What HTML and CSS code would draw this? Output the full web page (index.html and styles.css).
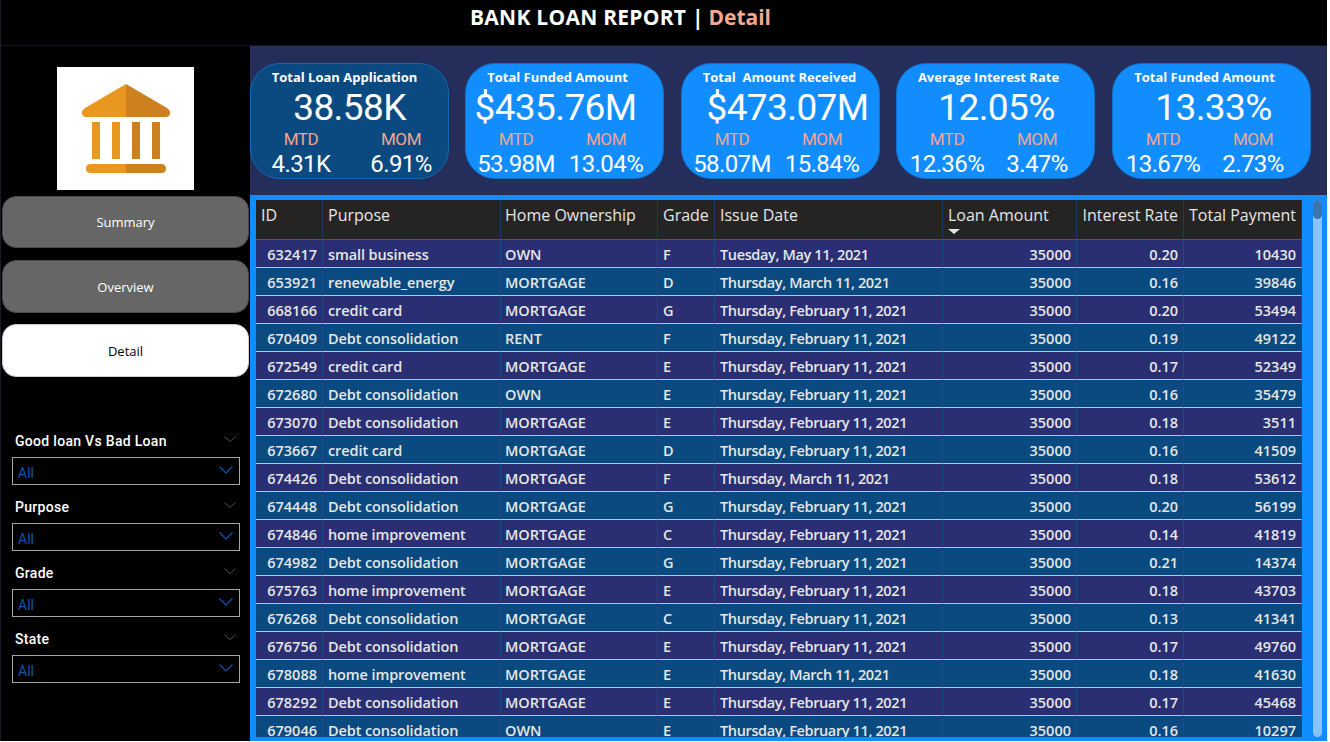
FILE: index.html
```html
<!DOCTYPE html>
<html lang="en">
<head>
  <meta charset="UTF-8" />
  <meta name="viewport" content="width=device-width, initial-scale=1.0"/>
  <title>Bank Loan Report | Detail</title>
  <link rel="stylesheet" href="styles.css">
</head>
<body>
  <div class="page">
    <header class="topbar">
      <h1>BANK LOAN REPORT | <span class="accent">Detail</span></h1>
    </header>

    <div class="content">
      <aside class="sidebar">
        <div class="logo">
          <svg width="88" height="90" viewBox="0 0 88 90">
            <path d="M44 0 L3 24 Q-1 27 0 30 Q1 33 4 33 L44 33 Z" fill="#e8971f"/>
            <path d="M44 0 L85 24 Q89 27 88 30 Q87 33 84 33 L44 33 Z" fill="#cc8020"/>
            <rect x="10" y="38" width="8" height="37" fill="#e8971f"/>
            <rect x="30" y="38" width="8" height="37" fill="#e8971f"/>
            <rect x="50" y="38" width="8" height="37" fill="#cc8020"/>
            <rect x="70" y="38" width="8" height="37" fill="#cc8020"/>
            <path d="M44 80 L9 80 Q4 80 4 84.500 Q4 89 9 89 L44 89 Z" fill="#e8971f"/>
            <path d="M44 80 L79 80 Q84 80 84 84.500 Q84 89 79 89 L44 89 Z" fill="#cc8020"/>
          </svg>
        </div>

        <nav class="nav">
          <button class="nav-btn">Summary</button>
          <button class="nav-btn">Overview</button>
          <button class="nav-btn active">Detail</button>
        </nav>

        <div class="slicers">
          <div class="slicer">
            <div class="slicer-title">Good loan Vs Bad Loan
              <svg class="chev-dim" width="12" height="6" viewBox="0 0 12 6"><path d="M0.500 0.500 L6 5.500 L11.500 0.500" /></svg>
            </div>
            <div class="slicer-box">All
              <svg class="chev-blue" width="14" height="8" viewBox="0 0 14 8"><path d="M0.500 0.500 L7 7 L13.500 0.500" /></svg>
            </div>
          </div>
          <div class="slicer">
            <div class="slicer-title">Purpose
              <svg class="chev-dim" width="12" height="6" viewBox="0 0 12 6"><path d="M0.500 0.500 L6 5.500 L11.500 0.500" /></svg>
            </div>
            <div class="slicer-box">All
              <svg class="chev-blue" width="14" height="8" viewBox="0 0 14 8"><path d="M0.500 0.500 L7 7 L13.500 0.500" /></svg>
            </div>
          </div>
          <div class="slicer">
            <div class="slicer-title">Grade
              <svg class="chev-dim" width="12" height="6" viewBox="0 0 12 6"><path d="M0.500 0.500 L6 5.500 L11.500 0.500" /></svg>
            </div>
            <div class="slicer-box">All
              <svg class="chev-blue" width="14" height="8" viewBox="0 0 14 8"><path d="M0.500 0.500 L7 7 L13.500 0.500" /></svg>
            </div>
          </div>
          <div class="slicer">
            <div class="slicer-title">State
              <svg class="chev-dim" width="12" height="6" viewBox="0 0 12 6"><path d="M0.500 0.500 L6 5.500 L11.500 0.500" /></svg>
            </div>
            <div class="slicer-box">All
              <svg class="chev-blue" width="14" height="8" viewBox="0 0 14 8"><path d="M0.500 0.500 L7 7 L13.500 0.500" /></svg>
            </div>
          </div>
        </div>
      </aside>

      <main class="main">
        <section class="kpis">
          <div class="kpi kpi-dark kpi-a">
            <div class="kpi-title">Total Loan Application</div>
            <div class="kpi-value">38.58K</div>
            <div class="kpi-row"><span class="lbl">MTD</span><span class="lbl">MOM</span></div>
            <div class="kpi-row"><span class="num">4.31K</span><span class="num">6.91%</span></div>
          </div>
          <div class="kpi kpi-b">
            <div class="kpi-title">Total Funded Amount</div>
            <div class="kpi-value">$435.76M</div>
            <div class="kpi-row"><span class="lbl">MTD</span><span class="lbl">MOM</span></div>
            <div class="kpi-row"><span class="num">53.98M</span><span class="num">13.04%</span></div>
          </div>
          <div class="kpi kpi-c">
            <div class="kpi-title">Total &nbsp;Amount Received</div>
            <div class="kpi-value">$473.07M</div>
            <div class="kpi-row"><span class="lbl">MTD</span><span class="lbl">MOM</span></div>
            <div class="kpi-row"><span class="num">58.07M</span><span class="num">15.84%</span></div>
          </div>
          <div class="kpi kpi-d">
            <div class="kpi-title">Average Interest Rate</div>
            <div class="kpi-value">12.05%</div>
            <div class="kpi-row"><span class="lbl">MTD</span><span class="lbl">MOM</span></div>
            <div class="kpi-row"><span class="num">12.36%</span><span class="num">3.47%</span></div>
          </div>
          <div class="kpi kpi-e">
            <div class="kpi-title">Total Funded Amount</div>
            <div class="kpi-value">13.33%</div>
            <div class="kpi-row"><span class="lbl">MTD</span><span class="lbl">MOM</span></div>
            <div class="kpi-row"><span class="num">13.67%</span><span class="num">2.73%</span></div>
          </div>
        </section>

        <section class="grid-frame">
          <div class="grid-clip">
            <table class="loans">
              <colgroup>
                <col class="c-id"><col class="c-purpose"><col class="c-home"><col class="c-grade">
                <col class="c-date"><col class="c-amt"><col class="c-rate"><col class="c-pay">
              </colgroup>
              <thead>
                <tr>
                  <th>ID</th><th>Purpose</th><th>Home Ownership</th><th>Grade</th><th>Issue Date</th>
                  <th>Loan Amount<span class="sort"></span></th>
                  <th class="r">Interest Rate</th><th class="r">Total Payment</th>
                </tr>
              </thead>
              <tbody>
                <tr><td class="r">632417</td><td>small business</td><td>OWN</td><td>F</td><td>Tuesday, May 11, 2021</td><td class="r">35000</td><td class="r">0.20</td><td class="r">10430</td></tr>
                <tr><td class="r">653921</td><td>renewable_energy</td><td>MORTGAGE</td><td>D</td><td>Thursday, March 11, 2021</td><td class="r">35000</td><td class="r">0.16</td><td class="r">39846</td></tr>
                <tr><td class="r">668166</td><td>credit card</td><td>MORTGAGE</td><td>G</td><td>Thursday, February 11, 2021</td><td class="r">35000</td><td class="r">0.20</td><td class="r">53494</td></tr>
                <tr><td class="r">670409</td><td>Debt consolidation</td><td>RENT</td><td>F</td><td>Thursday, February 11, 2021</td><td class="r">35000</td><td class="r">0.19</td><td class="r">49122</td></tr>
                <tr><td class="r">672549</td><td>credit card</td><td>MORTGAGE</td><td>E</td><td>Thursday, February 11, 2021</td><td class="r">35000</td><td class="r">0.17</td><td class="r">52349</td></tr>
                <tr><td class="r">672680</td><td>Debt consolidation</td><td>OWN</td><td>E</td><td>Thursday, February 11, 2021</td><td class="r">35000</td><td class="r">0.16</td><td class="r">35479</td></tr>
                <tr><td class="r">673070</td><td>Debt consolidation</td><td>MORTGAGE</td><td>E</td><td>Thursday, February 11, 2021</td><td class="r">35000</td><td class="r">0.18</td><td class="r">3511</td></tr>
                <tr><td class="r">673667</td><td>credit card</td><td>MORTGAGE</td><td>D</td><td>Thursday, February 11, 2021</td><td class="r">35000</td><td class="r">0.16</td><td class="r">41509</td></tr>
                <tr><td class="r">674426</td><td>Debt consolidation</td><td>MORTGAGE</td><td>F</td><td>Thursday, March 11, 2021</td><td class="r">35000</td><td class="r">0.18</td><td class="r">53612</td></tr>
                <tr><td class="r">674448</td><td>Debt consolidation</td><td>MORTGAGE</td><td>G</td><td>Thursday, February 11, 2021</td><td class="r">35000</td><td class="r">0.20</td><td class="r">56199</td></tr>
                <tr><td class="r">674846</td><td>home improvement</td><td>MORTGAGE</td><td>C</td><td>Thursday, February 11, 2021</td><td class="r">35000</td><td class="r">0.14</td><td class="r">41819</td></tr>
                <tr><td class="r">674982</td><td>Debt consolidation</td><td>MORTGAGE</td><td>G</td><td>Thursday, February 11, 2021</td><td class="r">35000</td><td class="r">0.21</td><td class="r">14374</td></tr>
                <tr><td class="r">675763</td><td>home improvement</td><td>MORTGAGE</td><td>E</td><td>Thursday, February 11, 2021</td><td class="r">35000</td><td class="r">0.18</td><td class="r">43703</td></tr>
                <tr><td class="r">676268</td><td>Debt consolidation</td><td>MORTGAGE</td><td>C</td><td>Thursday, February 11, 2021</td><td class="r">35000</td><td class="r">0.13</td><td class="r">41341</td></tr>
                <tr><td class="r">676756</td><td>Debt consolidation</td><td>MORTGAGE</td><td>E</td><td>Thursday, February 11, 2021</td><td class="r">35000</td><td class="r">0.17</td><td class="r">49760</td></tr>
                <tr><td class="r">678088</td><td>home improvement</td><td>MORTGAGE</td><td>E</td><td>Thursday, March 11, 2021</td><td class="r">35000</td><td class="r">0.18</td><td class="r">41630</td></tr>
                <tr><td class="r">678292</td><td>Debt consolidation</td><td>MORTGAGE</td><td>E</td><td>Thursday, February 11, 2021</td><td class="r">35000</td><td class="r">0.17</td><td class="r">45468</td></tr>
                <tr><td class="r">679046</td><td>Debt consolidation</td><td>OWN</td><td>E</td><td>Thursday, February 11, 2021</td><td class="r">35000</td><td class="r">0.16</td><td class="r">10297</td></tr>
              </tbody>
            </table>
          </div>
          <div class="scroll-track"><div class="scroll-thumb"></div></div>
        </section>
      </main>
    </div>
  </div>
</body>
</html>
```
FILE: styles.css
```css
html, body {
  margin: 0;
  padding: 0;
  background: #fff;
  overflow: hidden;
}
.page {
  width: 1327px;
  height: 741px;
  background: #000;
  display: flex;
  flex-direction: column;
  font-family: "Open Sans", "Noto Sans", sans-serif;
  box-sizing: border-box;
  border-left: 1px solid #1d1d26;
}
.topbar {
  height: 46px;
  flex: none;
  box-sizing: border-box;
  padding-left: 469px;
  border-bottom: 1px solid #111322;
}
.topbar h1 {
  margin: 0;
  font-size: 21px;
  line-height: 35px;
  font-weight: 700;
  letter-spacing: 0.25px;
  color: #fff;
}
.accent {
  color: #f4a98f;
  letter-spacing: 0;
  margin-left: -1px;
}
.content {
  flex: 1;
  display: flex;
  min-height: 0;
}

/* left column */
.sidebar {
  width: 249px;
  flex: none;
  display: flex;
  flex-direction: column;
}
.logo {
  width: 137px;
  height: 123px;
  margin: 21px 0 0 56px;
  background: #fff;
  display: flex;
  align-items: flex-start;
  justify-content: center;
  padding-top: 17px;
  box-sizing: border-box;
}
.nav {
  display: flex;
  flex-direction: column;
  margin: 6px 0 0 1px;
  gap: 11px;
}
.nav-btn {
  width: 247px;
  height: 53px;
  background: #666;
  border: 1px solid #4a4a4a;
  border-radius: 14px;
  color: #fff;
  font-family: "Open Sans", sans-serif;
  font-size: 13px;
  padding: 0;
}
.nav-btn:first-child {
  height: 52px;
  margin-bottom: 1px;
}
.nav-btn.active {
  background: #fff;
  color: #000;
  border-color: #ccc;
}
.slicers {
  margin: 53px 0 0 11px;
  width: 228px;
  display: flex;
  flex-direction: column;
  gap: 11px;
}
.slicer-title {
  display: flex;
  align-items: center;
  justify-content: space-between;
  height: 22px;
  margin-bottom: 5px;
  padding: 0 4px 0 3px;
  color: #fff;
  font-family: "Roboto", sans-serif;
  font-size: 14px;
  font-weight: 500;
  letter-spacing: 0.3px;
}
.chev-dim {
  fill: none;
  stroke: #5c4f3c;
  margin-top: -4px;
}
.slicer-box {
  height: 28px;
  box-sizing: border-box;
  border: 1px solid #a6a6a6;
  display: flex;
  align-items: center;
  justify-content: space-between;
  padding: 3px 6px 0 5px;
  color: #0f54b0;
  font-family: "Roboto", sans-serif;
  font-size: 14px;
}
.chev-blue {
  fill: none;
  stroke: #0f54b0;
  stroke-width: 1.2;
  margin-top: -5px;
}

/* right column */
.main {
  flex: 1;
  min-width: 0;
  background: #252e5a;
  display: flex;
  flex-direction: column;
}
.kpis {
  display: flex;
  gap: 16px;
  padding-top: 17px;
  height: 149px;
  box-sizing: border-box;
  flex: none;
}
.kpi {
  width: 199px;
  height: 116px;
  flex: none;
  box-sizing: border-box;
  background: #118dff;
  border: 1px solid #0f6fcb;
  border-radius: 30px;
  color: #fff;
  text-align: center;
  overflow: hidden;
}
.kpi-dark {
  background: #0a4a80;
  border-color: #1668b4;
}
.kpi-title {
  font-size: 13px;
  font-weight: 700;
  line-height: 18px;
  margin-top: 4px;
}
.kpi-value {
  font-family: "Roboto", sans-serif;
  font-size: 37px;
  line-height: 40px;
  letter-spacing: -0.6px;
  padding-top: 2px;
}
.kpi-row {
  display: grid;
  grid-template-columns: 90px 90px;
  justify-content: start;
  padding-left: 5px;
  font-family: "Roboto", sans-serif;
}
.lbl {
  font-size: 17px;
  line-height: 22px;
  letter-spacing: -0.4px;
  color: #f2a58e;
}
.num {
  font-size: 24px;
  line-height: 29px;
  letter-spacing: -0.6px;
}
.kpi-a .kpi-title { padding-right: 10px; }
.kpi-a .kpi-row { grid-template-columns: 100px 100px; padding-left: 0; }
.kpi-b .kpi-title { padding-right: 14px; }
.kpi-b .kpi-value { padding-right: 18px; }
.kpi-c { margin-left: 1px; }
.kpi-c .kpi-title { padding-right: 2px; }
.kpi-c .kpi-value { padding-left: 14px; }
.kpi-d .kpi-title { padding-right: 14px; }
.kpi-d .kpi-value { padding-left: 2px; }
.kpi-e { margin-left: 1px; }
.kpi-e .kpi-title { padding-right: 14px; }
.kpi-e .kpi-value { padding-left: 4px; }

.grid-frame {
  flex: 1;
  min-height: 0;
  display: flex;
  align-items: stretch;
  background: #118dff;
  padding: 5px 5px 4px 6px;
  gap: 11px;
}
.grid-clip {
  width: 1046px;
  overflow: hidden;
  flex: none;
}
.loans {
  width: 1046px;
  table-layout: fixed;
  border-collapse: separate;
  border-spacing: 0;
  font-size: 14.500px;
  font-weight: 600;
  color: #e6e6e6;
}
.c-id { width: 67px; }
.c-purpose { width: 178px; }
.c-home { width: 157px; }
.c-grade { width: 57px; }
.c-date { width: 228px; }
.c-amt { width: 134px; }
.c-rate { width: 107px; }
.c-pay { width: 118px; }
.loans th {
  height: 40px;
  box-sizing: border-box;
  background: #252423;
  text-align: left;
  vertical-align: top;
  font-size: 16px;
  font-weight: 500;
  line-height: 20px;
  padding: 5px 5px 0 5px;
  border-right: 1px solid #1f3a5c;
  border-bottom: 1px solid #1668b4;
  white-space: nowrap;
}
.loans th.r { text-align: right; }
.sort {
  display: block;
  width: 0;
  height: 0;
  margin-top: 4px;
  border-left: 6px solid transparent;
  border-right: 6px solid transparent;
  border-top: 5px solid #e6e6e6;
}
.loans td {
  height: 28px;
  box-sizing: border-box;
  padding: 1px 5px 0;
  border-right: 1px solid #1f4a80;
  border-bottom: 1px solid #bcc3de;
  white-space: nowrap;
  overflow: hidden;
}
.loans td:nth-child(2) { letter-spacing: -0.1px; }
.loans th:nth-child(3), .loans td:nth-child(3) { padding-left: 4px; }
.loans td:nth-child(5) { letter-spacing: -0.370px; }
.loans td.r { text-align: right; }
.loans tbody tr:nth-child(odd) td { background: #2a2f73; }
.loans tbody tr:nth-child(even) td { background: #0a4a80; }
.scroll-track {
  width: 10px;
  background: #8ac4ff;
  border-radius: 5px;
}
.scroll-thumb {
  height: 19px;
  background: #3e74ad;
  border-radius: 5px;
}
```
